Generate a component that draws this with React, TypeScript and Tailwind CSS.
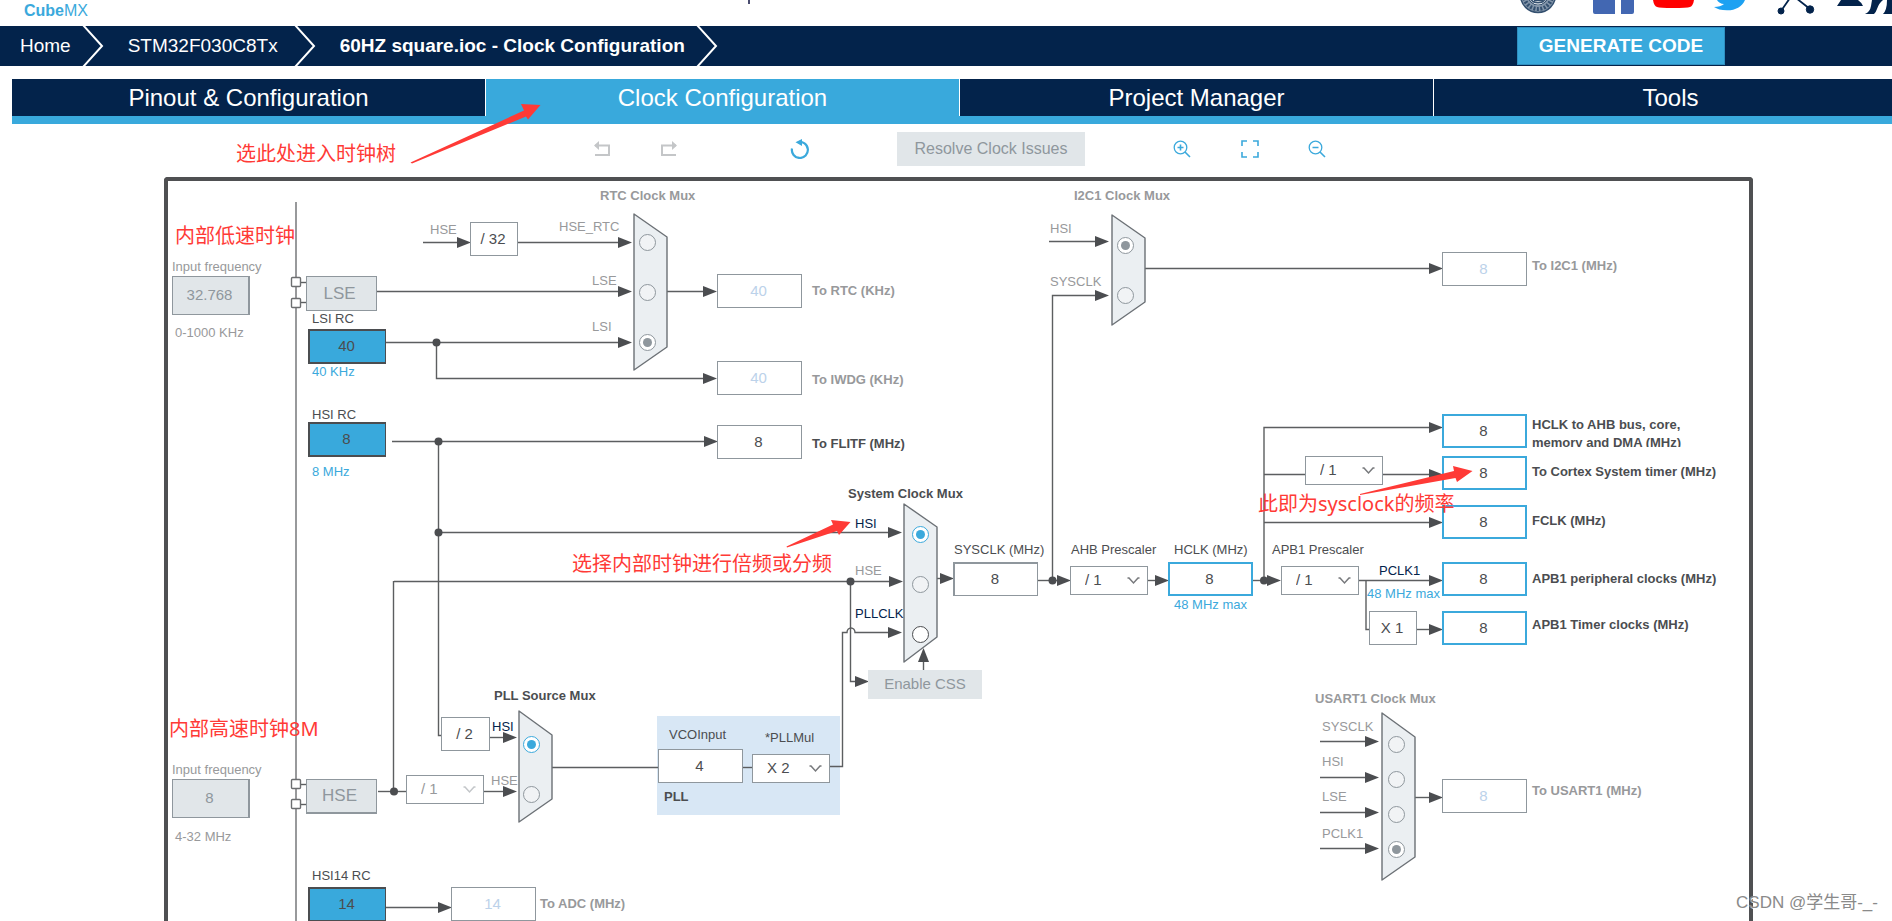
import { useState } from "react";

type Tone = "dim" | "dark" | "navy" | "blue";

const toneClass: Record<Tone, string> = {
  dim: "text-[#98999b]",
  dark: "text-[#4b4d50]",
  navy: "text-[#03234b]",
  blue: "text-[#3ba9dc]",
};

function Label({ at, text, tone = "dim", bold = false }: { at: string; text: string; tone?: Tone; bold?: boolean }) {
  return (
    <span className={`absolute whitespace-nowrap text-[13px] leading-4 ${bold ? "font-bold" : ""} ${toneClass[tone]} ${at}`}>
      {text}
    </span>
  );
}

type BoxKind = "output" | "active" | "idle" | "limit" | "source" | "disabled";

const boxClass: Record<BoxKind, string> = {
  output: "h-[34px] w-[85px] border border-[#8f979d] bg-white text-[#4b4d50]",
  idle: "h-[34px] w-[85px] border border-[#8f979d] bg-white text-[#bcd2ea]",
  active: "h-[34px] w-[85px] border-2 border-r border-b border-[#8f979d] bg-white text-[#4b4d50]",
  limit: "h-[34px] w-[85px] border-2 border-[#3ba9dc] bg-white text-[#4b4d50]",
  source: "h-[35px] w-[78px] border-2 border-r border-[#4b4d50] bg-[#39a9dc] text-[#4b4d50]",
  disabled: "h-[39px] w-[78px] border border-r-2 border-[#8f979d] bg-[#e1e6e9] text-[#8f979d]",
};

function ValueBox({ at, value, kind, name }: { at: string; value: string; kind: BoxKind; name: string }) {
  return (
    <input
      aria-label={name}
      defaultValue={value}
      disabled={kind === "disabled"}
      className={`absolute pb-[2px] pr-[2px] text-center text-[15px] outline-none ${boxClass[kind]} ${at}`}
    />
  );
}

function Factor({ at, text }: { at: string; text: string }) {
  return (
    <div className={`absolute flex h-[34px] items-center justify-center border border-[#8f979d] bg-white pr-[2px] text-[15px] text-[#4b4d50] ${at}`}>
      {text}
    </div>
  );
}

function Prescaler({ at, text, name, disabled = false }: { at: string; text: string; name: string; disabled?: boolean }) {
  return (
    <div className={`absolute h-[29px] w-[78px] ${at}`}>
      <select
        aria-label={name}
        disabled={disabled}
        defaultValue={text}
        className={`h-full w-full appearance-none border border-[#8f979d] bg-white px-[14px] text-[15px] opacity-100 outline-none ${disabled ? "text-[#98999b]" : "text-[#4b4d50]"}`}
      >
        <option value={text}>{text}</option>
      </select>
      <svg
        className={`pointer-events-none absolute right-2 top-[11px] ${disabled ? "text-[#c3c6c9]" : "text-[#77797c]"}`}
        width="13"
        height="8"
        viewBox="0 0 13 8"
        fill="none"
        stroke="currentColor"
        strokeWidth="1.5"
      >
        <path d="M0.5 1 H2 L6.5 6 L11 1 H12.5" />
      </svg>
    </div>
  );
}

type RadioKind = "dim" | "blue" | "dark";

const radioClass: Record<RadioKind, string> = {
  dim: "border-[#8f979d] bg-[#f1f3f5] before:bg-[#8f979d]",
  blue: "border-[#3ba9dc] bg-white before:bg-[#3ba9dc]",
  dark: "border-[#4b4d50] bg-white before:bg-[#4b4d50]",
};

function Radio({ at, group, name, kind = "dim", on = false }: { at: string; group: string; name: string; kind?: RadioKind; on?: boolean }) {
  return (
    <input
      type="radio"
      name={group}
      aria-label={`${group} ${name}`}
      defaultChecked={on}
      className={`absolute m-0 grid size-[17px] appearance-none place-items-center rounded-full border before:hidden before:size-[9px] before:rounded-full before:content-[''] checked:bg-white checked:before:block ${radioClass[kind]} ${at}`}
    />
  );
}

function Note({ at, text }: { at: string; text: string }) {
  return (
    <p className={`absolute whitespace-nowrap font-['Noto_Sans','Noto_Sans_CJK_SC',sans-serif] text-[20px] leading-6 text-[#ff3a36] ${at}`}>
      {text}
    </p>
  );
}

const wires = [
  "M423 242.5H460", "M518 242.5H620", "M377 291.5H620", "M386 342.5H620", "M436.5 342V378.5H705", "M667 291.5H705",
  "M392 441.5H710", "M438.5 441V735.5H441", "M438 532.5H890", "M394 581.5H890", "M393.5 581V791.5", "M850.5 581V681.5H858",
  "M830 766.5H842.5V632.5H847A4 4.5 0 0 1 855 632.5H890", "M923.5 670V660", "M937 578.5H946",
  "M1038 580.5H1062", "M1052.5 580V295.5H1097", "M1049 241.5H1097", "M1145 268.5H1432", "M1147 580.5H1160",
  "M1253 580.5H1272", "M1264 580V427.5H1432", "M1264 474.5H1305", "M1382 474.5H1434", "M1264 522.5H1434",
  "M1358 580.5H1434", "M1366 580V629.5H1369", "M1417 629.5H1434",
  "M378 791.5H406", "M483 791.5H505", "M490 737.5H505", "M552 767.5H658", "M743 767.5H752", "M386 907.5H440",
  "M1320 741.5H1367", "M1320 777.5H1367", "M1320 812.5H1367", "M1320 848.5H1367", "M1415 797.5H1430",
  "M296 282.5H306", "M296 302.5H306", "M296 784.5H306", "M296 804.5H306",
];

const arrowTips: [number, number][] = [
  [471, 242.5], [632, 242.5], [632, 291.5], [632, 342.5], [717, 378.5], [717, 291.5], [718, 441.5], [902, 532.5],
  [903, 581.5], [902, 632.5], [869, 681.5], [954, 578.5], [1071, 580.5], [1109, 295.5], [1109, 241.5], [1443, 268.5],
  [1169, 580.5], [1281, 580.5], [1443, 427.5], [1443, 474.5], [1443, 522.5], [1443, 580.5], [1443, 629.5],
  [517, 791.5], [517, 737.5], [452, 907.5], [1379, 741.5], [1379, 777.5], [1379, 812.5], [1379, 848.5], [1443, 797.5],
];

const dots: [number, number][] = [
  [436.5, 342.5], [438.5, 441.5], [438.5, 532.5], [850.5, 581.5], [1052.5, 580.5], [1264, 580.5], [394, 791.5],
];

const muxes = [
  "634,214 667,237 667,347 634,370",
  "1112,215 1145,238 1145,302 1112,325",
  "904,504 937,527 937,637 904,662",
  "519,711 552,735 552,799 519,822",
  "1382,713 1415,737 1415,857 1382,880",
];

function Wires() {
  return (
    <svg className="pointer-events-none absolute left-0 top-0" width="1892" height="751" viewBox="0 170 1892 751" fill="none">
      <path d="M296 202V921" stroke="#98999b" strokeWidth="2" />
      <g stroke="#5c5e60" strokeWidth="1.4">
        {wires.map((d) => (
          <path key={d} d={d} />
        ))}
      </g>
      <g fill="#4b4d50">
        {arrowTips.map(([x, y]) => (
          <path key={`${x}-${y}`} d={`M${x} ${y}l-14 -5.5v11z`} />
        ))}
        <path d="M923.5 648l-5.5 14h11z" />
        {dots.map(([x, y]) => (
          <circle key={`${x}-${y}`} cx={x} cy={y} r="4" />
        ))}
      </g>
      <g fill="#ebeff2" stroke="#6c7176" strokeWidth="1.4" strokeLinejoin="round">
        {muxes.map((p) => (
          <polygon key={p} points={p} />
        ))}
      </g>
      <g fill="#fff" stroke="#6c6e70" strokeWidth="1.4">
        {[282, 303, 784, 804].map((y) => (
          <rect key={y} x="291.5" y={y - 4.5} width="9" height="9" rx="1" />
        ))}
      </g>
    </svg>
  );
}

function ClockTree() {
  return (
    <section className="relative min-h-0 flex-1 pl-[164px] pr-[139px] pt-[7px]" aria-label="Clock tree">
      <div className="h-full rounded-t-sm border-x-4 border-t-4 border-[#4f5052]" />
      <div className="absolute left-[657px] top-[546px] h-[99px] w-[183px] bg-[#d8e7f5]" />
      <Wires />

      <Label at="left-[172px] top-[89px]" text="Input frequency" />
      <ValueBox at="left-[172px] top-[106px]" value="32.768" kind="disabled" name="LSE input frequency" />
      <Label at="left-[175px] top-[155px]" text="0-1000 KHz" />
      <div className="absolute left-[306px] top-[106px] flex h-[35px] w-[71px] items-center justify-center border border-[#8f979d] bg-[#e1e6e9] pr-1 text-[17px] text-[#8f979d]">LSE</div>
      <Label at="left-[312px] top-[141px]" text="LSI RC" tone="dark" />
      <ValueBox at="left-[308px] top-[159px]" value="40" kind="source" name="LSI RC" />
      <Label at="left-[312px] top-[194px]" text="40 KHz" tone="blue" />
      <Label at="left-[312px] top-[237px]" text="HSI RC" tone="dark" />
      <ValueBox at="left-[308px] top-[252px]" value="8" kind="source" name="HSI RC" />
      <Label at="left-[312px] top-[294px]" text="8 MHz" tone="blue" />

      <Label at="left-[600px] top-[18px]" text="RTC Clock Mux" bold />
      <Label at="left-[430px] top-[52px]" text="HSE" />
      <Factor at="left-[470px] top-[52px] w-[48px]" text="/ 32" />
      <Label at="left-[559px] top-[49px]" text="HSE_RTC" />
      <Label at="left-[592px] top-[103px]" text="LSE" />
      <Label at="left-[592px] top-[149px]" text="LSI" />
      <Radio at="left-[639px] top-[64px]" group="RTC Clock Mux" name="HSE_RTC" />
      <Radio at="left-[639px] top-[114px]" group="RTC Clock Mux" name="LSE" />
      <Radio at="left-[639px] top-[164px]" group="RTC Clock Mux" name="LSI" on />
      <ValueBox at="left-[717px] top-[104px]" value="40" kind="idle" name="To RTC" />
      <Label at="left-[812px] top-[113px]" text="To RTC (KHz)" bold />
      <ValueBox at="left-[717px] top-[191px]" value="40" kind="idle" name="To IWDG" />
      <Label at="left-[812px] top-[202px]" text="To IWDG (KHz)" bold />
      <ValueBox at="left-[717px] top-[255px]" value="8" kind="output" name="To FLITF" />
      <Label at="left-[812px] top-[266px]" text="To FLITF (MHz)" tone="dark" bold />

      <Label at="left-[1074px] top-[18px]" text="I2C1 Clock Mux" bold />
      <Label at="left-[1050px] top-[51px]" text="HSI" />
      <Label at="left-[1050px] top-[104px]" text="SYSCLK" />
      <Radio at="left-[1117px] top-[67px]" group="I2C1 Clock Mux" name="HSI" on />
      <Radio at="left-[1117px] top-[117px]" group="I2C1 Clock Mux" name="SYSCLK" />
      <ValueBox at="left-[1442px] top-[82px]" value="8" kind="idle" name="To I2C1" />
      <Label at="left-[1532px] top-[88px]" text="To I2C1 (MHz)" bold />

      <Label at="left-[848px] top-[316px]" text="System Clock Mux" tone="dark" bold />
      <Label at="left-[855px] top-[346px]" text="HSI" tone="navy" />
      <Label at="left-[855px] top-[393px]" text="HSE" />
      <Label at="left-[855px] top-[436px]" text="PLLCLK" tone="navy" />
      <Radio at="left-[912px] top-[356px]" group="System Clock Mux" name="HSI" kind="blue" on />
      <Radio at="left-[912px] top-[406px]" group="System Clock Mux" name="HSE" />
      <Radio at="left-[912px] top-[456px]" group="System Clock Mux" name="PLLCLK" kind="dark" />
      <button disabled className="absolute left-[868px] top-[500px] h-[29px] w-[114px] bg-[#e1e6e9] text-[15px] text-[#8f979d]">Enable CSS</button>

      <Label at="left-[954px] top-[372px]" text="SYSCLK (MHz)" tone="dark" />
      <ValueBox at="left-[953px] top-[392px]" value="8" kind="active" name="SYSCLK" />
      <Label at="left-[1071px] top-[372px]" text="AHB Prescaler" tone="dark" />
      <Prescaler at="left-[1070px] top-[396px]" text="/ 1" name="AHB Prescaler" />
      <Label at="left-[1174px] top-[372px]" text="HCLK (MHz)" tone="dark" />
      <ValueBox at="left-[1168px] top-[392px]" value="8" kind="limit" name="HCLK" />
      <Label at="left-[1174px] top-[427px]" text="48 MHz max" tone="blue" />
      <Label at="left-[1272px] top-[372px]" text="APB1 Prescaler" tone="dark" />
      <Prescaler at="left-[1281px] top-[396px]" text="/ 1" name="APB1 Prescaler" />
      <Prescaler at="left-[1305px] top-[286px]" text="/ 1" name="Cortex Prescaler" />
      <Label at="left-[1379px] top-[393px]" text="PCLK1" tone="navy" />
      <Label at="left-[1367px] top-[416px]" text="48 MHz max" tone="blue" />
      <Factor at="left-[1369px] top-[441px] w-[48px]" text="X 1" />

      <ValueBox at="left-[1442px] top-[244px]" value="8" kind="limit" name="HCLK to AHB bus" />
      <p className="absolute left-[1532px] top-[246px] h-[31px] w-[170px] overflow-hidden text-[13px] font-bold leading-[18px] text-[#4b4d50]">
        HCLK to AHB bus, core, memory and DMA (MHz)
      </p>
      <ValueBox at="left-[1442px] top-[286px]" value="8" kind="limit" name="To Cortex System timer" />
      <Label at="left-[1532px] top-[294px]" text="To Cortex System timer (MHz)" tone="dark" bold />
      <ValueBox at="left-[1442px] top-[335px]" value="8" kind="limit" name="FCLK" />
      <Label at="left-[1532px] top-[343px]" text="FCLK (MHz)" tone="dark" bold />
      <ValueBox at="left-[1442px] top-[392px]" value="8" kind="limit" name="APB1 peripheral clocks" />
      <Label at="left-[1532px] top-[401px]" text="APB1 peripheral clocks (MHz)" tone="dark" bold />
      <ValueBox at="left-[1442px] top-[441px]" value="8" kind="limit" name="APB1 Timer clocks" />
      <Label at="left-[1532px] top-[447px]" text="APB1 Timer clocks (MHz)" tone="dark" bold />

      <Label at="left-[172px] top-[592px]" text="Input frequency" />
      <ValueBox at="left-[172px] top-[609px]" value="8" kind="disabled" name="HSE input frequency" />
      <Label at="left-[175px] top-[659px]" text="4-32 MHz" />
      <div className="absolute left-[306px] top-[609px] flex h-[35px] w-[71px] items-center justify-center border border-b-2 border-[#8f979d] bg-[#e1e6e9] pr-1 text-[17px] text-[#8f979d]">HSE</div>
      <Prescaler at="left-[406px] top-[605px]" text="/ 1" name="PLL HSE prescaler" disabled />
      <Label at="left-[494px] top-[518px]" text="PLL Source Mux" tone="dark" bold />
      <Factor at="left-[441px] top-[547px] w-[49px]" text="/ 2" />
      <Label at="left-[492px] top-[549px]" text="HSI" tone="navy" />
      <Label at="left-[491px] top-[603px]" text="HSE" />
      <Radio at="left-[523px] top-[566px]" group="PLL Source Mux" name="HSI" kind="blue" on />
      <Radio at="left-[523px] top-[616px]" group="PLL Source Mux" name="HSE" />

      <Label at="left-[669px] top-[557px]" text="VCOInput" tone="dark" />
      <Label at="left-[765px] top-[560px]" text="*PLLMul" tone="dark" />
      <ValueBox at="left-[658px] top-[579px]" value="4" kind="output" name="VCOInput" />
      <Prescaler at="left-[752px] top-[584px]" text="X 2" name="PLLMul" />
      <Label at="left-[664px] top-[619px]" text="PLL" tone="dark" bold />

      <Label at="left-[312px] top-[698px]" text="HSI14 RC" tone="dark" />
      <ValueBox at="left-[308px] top-[717px]" value="14" kind="source" name="HSI14 RC" />
      <ValueBox at="left-[451px] top-[717px]" value="14" kind="idle" name="To ADC" />
      <Label at="left-[540px] top-[726px]" text="To ADC (MHz)" bold />

      <Label at="left-[1315px] top-[521px]" text="USART1 Clock Mux" bold />
      <Label at="left-[1322px] top-[549px]" text="SYSCLK" />
      <Label at="left-[1322px] top-[584px]" text="HSI" />
      <Label at="left-[1322px] top-[619px]" text="LSE" />
      <Label at="left-[1322px] top-[656px]" text="PCLK1" />
      <Radio at="left-[1388px] top-[566px]" group="USART1 Clock Mux" name="SYSCLK" />
      <Radio at="left-[1388px] top-[601px]" group="USART1 Clock Mux" name="HSI" />
      <Radio at="left-[1388px] top-[636px]" group="USART1 Clock Mux" name="LSE" />
      <Radio at="left-[1388px] top-[671px]" group="USART1 Clock Mux" name="PCLK1" on />
      <ValueBox at="left-[1442px] top-[609px]" value="8" kind="idle" name="To USART1" />
      <Label at="left-[1532px] top-[613px]" text="To USART1 (MHz)" bold />
    </section>
  );
}

function Annotations() {
  return (
    <div className="pointer-events-none absolute inset-0 overflow-hidden">
      <svg className="absolute left-0 top-0" width="1892" height="921" viewBox="0 0 1892 921" fill="#ff3a36">
        <path d="M410.5 162.5L524 110.5L521 104L540.5 105L528 119.5L526 116.5L412 163.5Z" />
        <path d="M786.5 546.5L833 524.5L831 520L850.500 522L839 535L837 531L787 547.5Z" />
        <path d="M1360 494L1454 471L1453 466L1472.5 471L1457 482L1455.5 478L1360 495Z" />
      </svg>
      <Note at="left-[236px] top-[142px]" text="选此处进入时钟树" />
      <Note at="left-[175px] top-[224px]" text="内部低速时钟" />
      <Note at="left-[572px] top-[552px]" text="选择内部时钟进行倍频或分频" />
      <Note at="left-[1258px] top-[492px]" text="此即为sysclock的频率" />
      <Note at="left-[169px] top-[717px]" text="内部高速时钟8M" />
      <p className="absolute bottom-[6px] right-[14px] whitespace-nowrap font-['Liberation_Sans','Noto_Sans_CJK_SC',sans-serif] text-[17px] leading-6 text-[#8a8a8a] [text-shadow:1px_1px_0_#ffffff]">
        CSDN @学生哥-_-
      </p>
    </div>
  );
}

function Header() {
  return (
    <header className="flex h-[26px] justify-between overflow-hidden">
      <div className="relative w-[760px] text-[16px] leading-4 text-[#3ba9dc]">
        <b className="absolute -top-[13px] left-3">STM32</b>
        <span className="absolute top-[3px] left-6 whitespace-nowrap">
          <b>Cube</b>MX
        </span>
        <span className="absolute left-[748px] top-0 h-1 w-[2px] bg-[#4b4d70]" />
      </div>
      <div className="flex">
        <svg className="mr-[35px]" width="40" height="26" viewBox="0 0 40 26" fill="none" stroke="#34506f">
          <circle cx="20" cy="-5" r="14" strokeWidth="7" stroke="#8496aa" />
          <circle cx="20" cy="-5" r="14" strokeWidth="4" strokeDasharray="2 1.5" />
          <circle cx="20" cy="-5" r="17.5" strokeWidth="1.5" />
          <circle cx="20" cy="-5" r="10" strokeWidth="1.2" />
          <path d="M13 -1C15 4 25 4 27 -1M16 0.500H25" strokeWidth="1.5" />
        </svg>
        <svg className="mr-[19px]" width="41" height="26" viewBox="0 0 41 26">
          <path d="M0 0H22V14H2Q0 14 0 12ZM28 0H41V12Q41 14 39 14H28Z" fill="#4267b2" />
        </svg>
        <svg className="mr-[19px]" width="41" height="26" viewBox="0 0 41 26">
          <path d="M0 0H41Q40 6 37 7Q34 8 20 8Q7 8 4 7Q1 6 0 0Z" fill="#ff0000" />
        </svg>
        <svg className="mr-[29px]" width="34" height="26" viewBox="0 0 34 26">
          <path d="M4 0H32C29 7 22 10.5 14 10.3C8 10.3 4 9 1 7C5 7 9 6 11 4C8 4 5 2 4 0Z" fill="#1da1f2" />
        </svg>
        <svg className="mr-[22px]" width="39" height="26" viewBox="0 0 39 26" fill="#03234b" stroke="#03234b">
          <path d="M5 11L14 -2M34 9L20 -2" strokeWidth="1.8" />
          <circle cx="5" cy="11" r="3" />
          <circle cx="34" cy="9.5" r="3.7" />
        </svg>
        <svg width="55" height="26" viewBox="0 0 55 26" fill="#03234b">
          <path d="M4 0H21Q24 2 26 6H0ZM35 0H46Q42 3 40 9Q39 12 37 14H28Q33 12 34 6ZM50 0H55V14H46Q50 10 50 0Z" />
        </svg>
      </div>
    </header>
  );
}

function Chevron() {
  return (
    <svg width="22" height="40" viewBox="0 0 22 40" fill="none" stroke="#fff" strokeWidth="2" aria-hidden="true">
      <path d="M1 -1L20 20L1 41" />
    </svg>
  );
}

function Breadcrumb() {
  return (
    <nav className="flex h-10 items-center bg-[#03234b] pl-5 text-[19px] text-white">
      <a href="#home">Home</a>
      <div className="ml-[11px]"><Chevron /></div>
      <a href="#device" className="ml-6">STM32F030C8Tx</a>
      <div className="ml-4"><Chevron /></div>
      <a href="#clock" className="ml-6 font-bold">60HZ square.ioc - Clock Configuration</a>
      <div className="ml-[11px]"><Chevron /></div>
      <button className="mr-[167px] ml-auto h-[38px] w-[208px] border border-[#2f8fc0] bg-[#39a9dc] font-bold">GENERATE CODE</button>
    </nav>
  );
}

const tabs = ["Pinout & Configuration", "Clock Configuration", "Project Manager", "Tools"];

function Tabs() {
  const [active, setActive] = useState(1);
  return (
    <div role="tablist" className="-mr-4 ml-3 mt-[13px] grid grid-cols-4 border-b-8 border-[#39a9dc] text-[24px] text-white">
      {tabs.map((tab, i) => (
        <button
          key={tab}
          role="tab"
          aria-selected={i === active}
          onClick={() => setActive(i)}
          className={`h-[37px] border-r border-white leading-9 ${i === active ? "bg-[#39a9dc]" : "bg-[#03234b]"}`}
        >
          {tab}
        </button>
      ))}
    </div>
  );
}

function Toolbar() {
  return (
    <div className="flex h-[46px] items-center pb-[1px] pt-1 pl-[590px] text-[#3ba9dc]">
      <button aria-label="Undo" className="flex size-6 items-center justify-center text-[#c4c6c8]">
        <svg width="18" height="16" viewBox="0 0 18 16" fill="none" stroke="currentColor" strokeWidth="2">
          <path d="M2 4.5H16V14H2" />
          <path d="M6 0V9L1 4.5Z" fill="currentColor" stroke="none" />
        </svg>
      </button>
      <button aria-label="Redo" className="ml-[43px] flex size-6 items-center justify-center text-[#c4c6c8]">
        <svg width="18" height="16" viewBox="0 0 18 16" fill="none" stroke="currentColor" strokeWidth="2">
          <path d="M16 4.5H2V14H16" />
          <path d="M12 0V9L17 4.5Z" fill="currentColor" stroke="none" />
        </svg>
      </button>
      <button aria-label="Reset" className="ml-[107px] flex size-6 items-center justify-center">
        <svg width="20" height="20" viewBox="0 0 20 20" fill="none" stroke="currentColor" strokeWidth="2.2">
          <path d="M2 9.5A8 8 0 1 0 8 3.2" />
          <path d="M12 0V7L5.500 3.2Z" fill="currentColor" stroke="none" />
        </svg>
      </button>
      <button disabled className="ml-[85px] h-[34px] w-[188px] bg-[#e1e6e9] text-[16px] text-[#8f979d]">Resolve Clock Issues</button>
      <button aria-label="Zoom in" className="ml-[85px] flex size-6 items-center justify-center">
        <svg width="18" height="18" viewBox="0 0 18 18" fill="none" stroke="currentColor" strokeWidth="1.3">
          <circle cx="7.5" cy="7.5" r="6.3" />
          <path d="M12 12L17 17M4.5 7.5H10.5M7.5 4.5V10.5" strokeWidth="1.6" />
        </svg>
      </button>
      <button aria-label="Fit to window" className="ml-11 flex size-6 items-center justify-center">
        <svg width="18" height="18" viewBox="0 0 18 18" fill="none" stroke="currentColor" strokeWidth="1.6">
          <path d="M1 6V1H6M12 1H17V6M17 12V17H12M6 17H1V12" />
        </svg>
      </button>
      <button aria-label="Zoom out" className="ml-[43px] flex size-6 items-center justify-center">
        <svg width="18" height="18" viewBox="0 0 18 18" fill="none" stroke="currentColor" strokeWidth="1.3">
          <circle cx="7.5" cy="7.5" r="6.3" />
          <path d="M12 12L17 17M4.5 7.5H10.5" strokeWidth="1.6" />
        </svg>
      </button>
    </div>
  );
}

export default function App() {
  return (
    <div className="relative flex h-screen flex-col overflow-hidden bg-white font-['Liberation_Sans',sans-serif]">
      <Header />
      <Breadcrumb />
      <Tabs />
      <Toolbar />
      <ClockTree />
      <Annotations />
    </div>
  );
}
